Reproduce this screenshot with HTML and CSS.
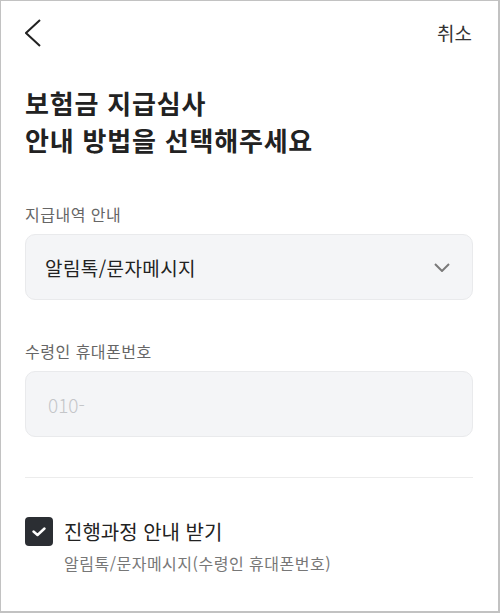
FILE: index.html
```html
<!DOCTYPE html>
<html lang="ko">
<head>
<meta charset="utf-8">
<link rel="stylesheet" href="styles.css">
</head>
<body>
<div class="screen">
  <header class="topbar">
    <button class="back" aria-label="뒤로">
      <svg width="16" height="28" viewBox="0 0 16 28"><polyline points="15,1 1,14 15,27" fill="none" stroke="#222" stroke-width="2"/></svg>
    </button>
    <span class="cancel">취소</span>
  </header>

  <h1 class="title">보험금 지급심사<br>안내 방법을 선택해주세요</h1>

  <div class="field">
    <div class="label">지급내역 안내</div>
    <div class="box select">
      <span class="value">알림톡/문자메시지</span>
      <svg class="caret" width="16" height="9" viewBox="0 0 16 9"><polyline points="1,1 8,8 15,1" fill="none" stroke="#7a7a7a" stroke-width="2"/></svg>
    </div>
  </div>

  <div class="field second">
    <div class="label">수령인 휴대폰번호</div>
    <div class="box input">
      <span class="placeholder">010-</span>
    </div>
  </div>

  <hr class="divider">

  <div class="check-row">
    <span class="checkbox">
      <svg width="14" height="10" viewBox="0 0 14 10"><polyline points="1.5,4.5 5.5,8 12.5,1.5" fill="none" stroke="#fff" stroke-width="2.4" stroke-linecap="round" stroke-linejoin="round"/></svg>
    </span>
    <span class="check-label">진행과정 안내 받기</span>
  </div>
  <div class="check-sub">알림톡/문자메시지(수령인 휴대폰번호)</div>
</div>
</body>
</html>
```

FILE: styles.css
```css
* { box-sizing: border-box; }
html, body { margin: 0; padding: 0; background: #fff; }
body {
  font-family: "Noto Sans CJK KR", "Noto Sans", sans-serif;
  color: #222;
}
.screen {
  width: 500px;
  height: 613px;
  border: 1px solid #c2c2c2;
  border-right-width: 2px;
  border-bottom-width: 2px;
  background: #fff;
  overflow: hidden;
  padding: 0 25px 0 24px;
}
.topbar {
  height: 63px;
  display: flex;
  align-items: center;
  justify-content: space-between;
}
.back {
  border: 0;
  background: none;
  padding: 0;
  display: flex;
  align-items: center;
}
.cancel {
  font-size: 19px;
  color: #333;
  margin-right: 1px;
}
.title {
  margin: 20px 0 0;
  font-size: 26px;
  line-height: 37px;
  font-weight: 700;
  color: #222;
  letter-spacing: 0.8px;
}
.field { margin-top: 45px; }
.field.second { margin-top: 40px; }
.label {
  font-size: 16px;
  line-height: 22px;
  color: #666;
  letter-spacing: 0.5px;
  margin-bottom: 9px;
}
.box {
  height: 66px;
  border-radius: 10px;
  background: #f4f5f7;
  border: 1px solid #e9eaec;
  display: flex;
  align-items: center;
  padding: 0 22px 0 19px;
}
.select { justify-content: space-between; }
.value { font-size: 19px; color: #222; letter-spacing: 0.4px; }
.caret { display: block; }
.placeholder { font-size: 19px; color: #c4c6c9; padding-left: 3px; font-weight: 300; }
.divider {
  border: 0;
  border-top: 1px solid #ececec;
  margin: 40px 0 0;
}
.check-row {
  margin-top: 39px;
  display: flex;
  align-items: center;
  gap: 11px;
}
.checkbox {
  width: 28px;
  height: 29px;
  border-radius: 4px;
  background: #2b2e33;
  display: flex;
  align-items: center;
  justify-content: center;
}
.checkbox svg { display: block; }
.check-label { font-size: 20px; color: #222; }
.check-sub {
  margin: 5px 0 0 39px;
  font-size: 16px;
  color: #777;
  letter-spacing: 0.5px;
}
```
